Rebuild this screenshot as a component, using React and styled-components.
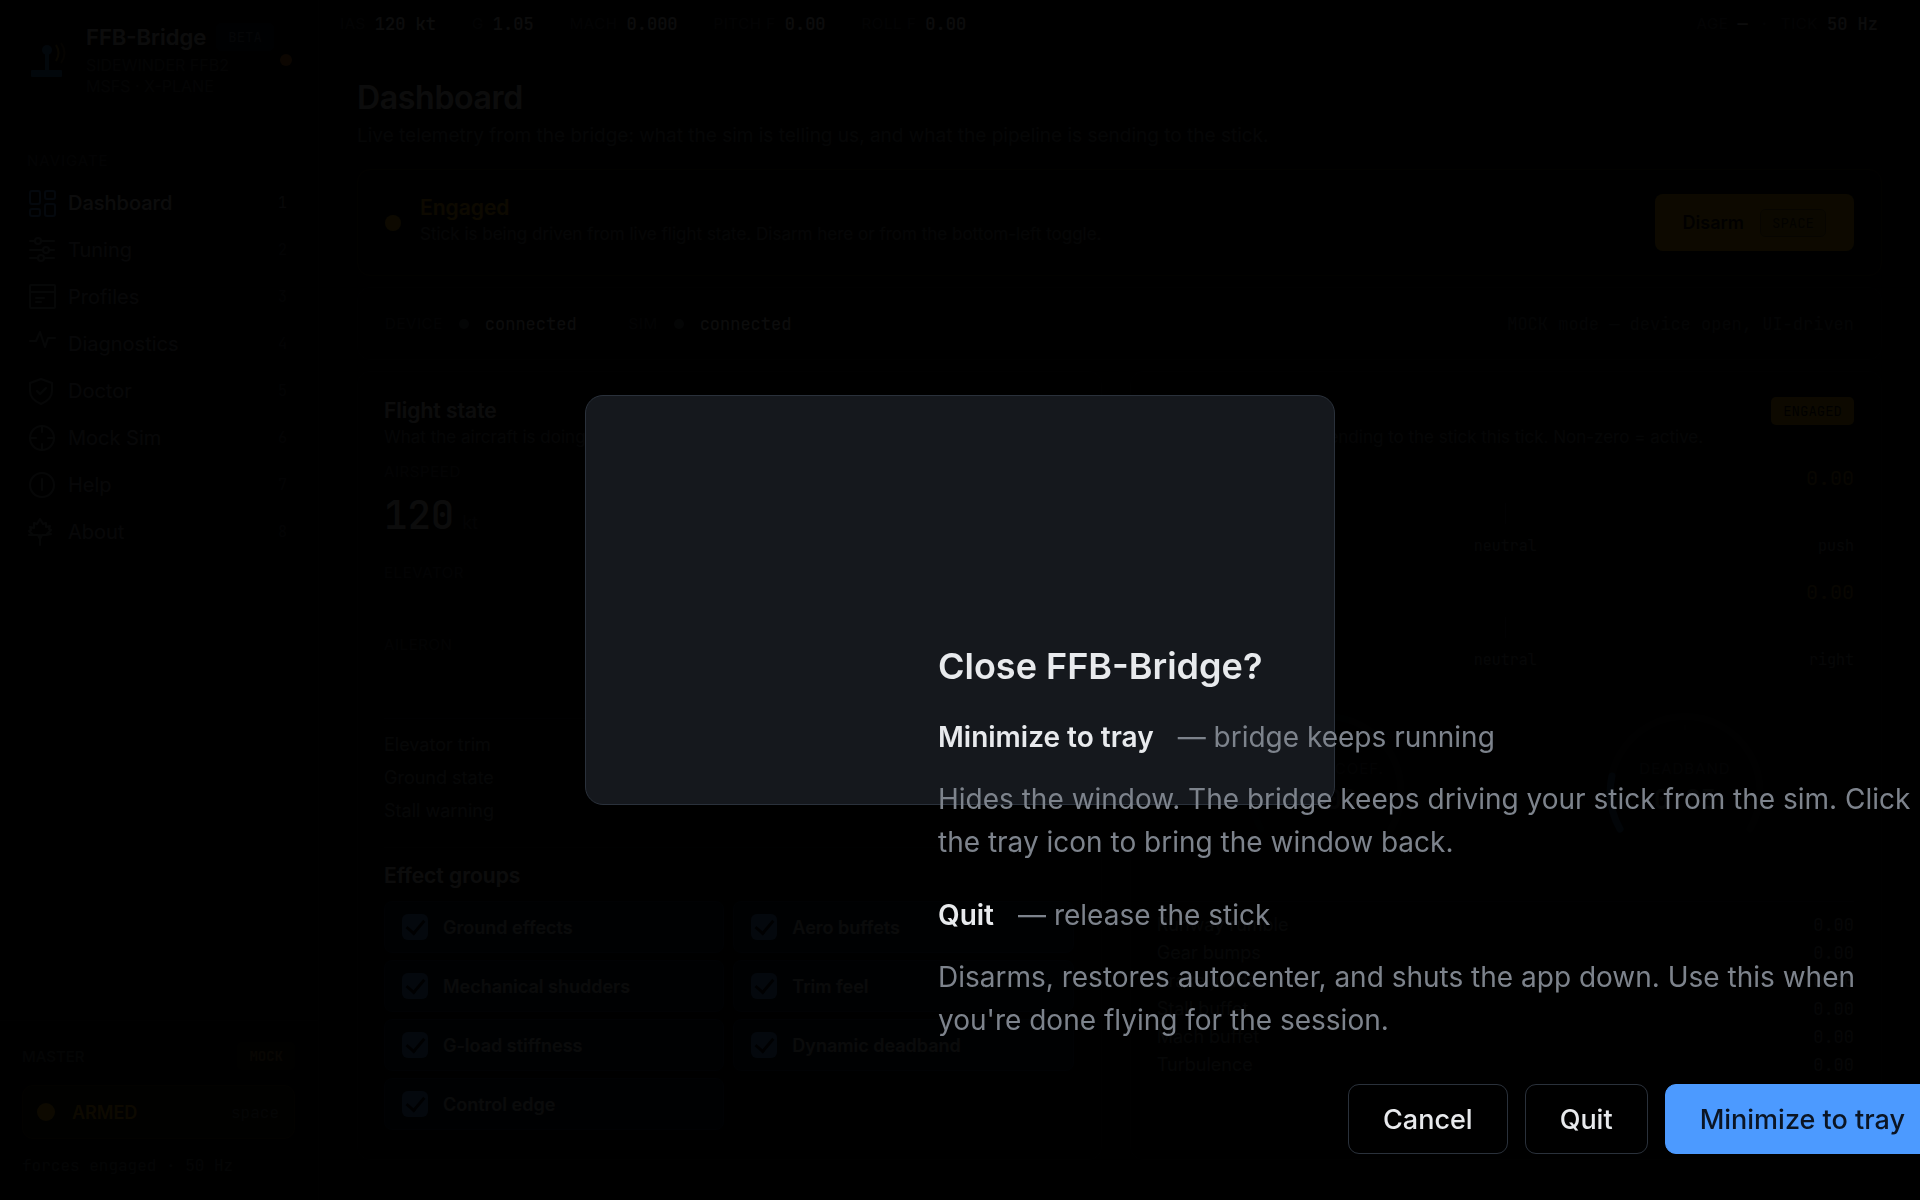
import React, { useState } from 'react';
import styled, { createGlobalStyle } from 'styled-components';

const mono = `'JetBrains Mono', 'DejaVu Sans Mono', 'Liberation Mono', monospace`;

const GlobalStyle = createGlobalStyle`
  * {
    box-sizing: border-box;
  }

  body {
    margin: 0;
    background: #08090b;
    color: #e8eaed;
    font-family: Inter, 'Liberation Sans', sans-serif;
    font-size: 18px;
    overflow: hidden;
  }

  button, input {
    font-family: inherit;
  }

  h1, h2, p, dl, dd, ul {
    margin: 0;
    padding: 0;
  }
`;

const Shell = styled.div`
  display: grid;
  grid-template-columns: 319px minmax(0, 1fr);
  min-height: 100vh;
`;

/* ---------- sidebar ---------- */

const Sidebar = styled.aside`
  display: flex;
  flex-direction: column;
  height: 100vh;
  border-right: 1px solid #1a1e24;
  background: #08090b;
`;

const Brand = styled.div`
  display: flex;
  align-items: center;
  gap: 20px;
  padding: 23px 26px 32px 22px;
`;

const BrandText = styled.div`
  flex: 1;
  min-width: 0;
`;

const BrandTitle = styled.div`
  display: flex;
  align-items: center;
  gap: 10px;
  height: 28px;
  font-size: 22px;
  font-weight: 600;
  white-space: nowrap;
`;

const BrandSub = styled.div`
  margin-top: 4px;
  font-size: 16px;
  line-height: 21px;
  color: #4a4f58;
  white-space: nowrap;
`;

const Badge = styled.span`
  display: inline-flex;
  align-items: center;
  height: 28px;
  padding: 0 11px;
  border: 1px solid ${(p) => p.$border || 'transparent'};
  border-radius: 5px;
  background: ${(p) => p.$bg};
  color: ${(p) => p.$color};
  font-family: ${mono};
  font-size: 14px;
  font-weight: ${(p) => p.$weight || 400};
`;

const Dot = styled.span`
  flex: none;
  width: ${(p) => p.$size}px;
  height: ${(p) => p.$size}px;
  border-radius: 50%;
  background: ${(p) => p.$color};
`;

const Nav = styled.nav`
  display: flex;
  flex-direction: column;
  gap: 3px;
  padding: 22px 13px;
`;

const NavCaption = styled.div`
  padding: 0 14px 7px;
  font-size: 15px;
  line-height: 20px;
  letter-spacing: 1px;
  color: #42474f;
`;

const NavItem = styled.a`
  display: flex;
  align-items: center;
  gap: 12px;
  height: 44px;
  padding: 0 18px 0 15px;
  border-radius: 8px;
  font-size: 20px;
  text-decoration: none;
  font-weight: ${(p) => (p.$active ? 500 : 400)};
  color: ${(p) => (p.$active ? '#e8eaed' : '#8a9099')};

  svg {
    width: 28px;
    height: 28px;
    color: ${(p) => (p.$active ? '#4c9aff' : '#7d838c')};
  }
`;

const NavKey = styled.span`
  margin-left: auto;
  font-family: ${mono};
  font-size: 15px;
  font-weight: 400;
  color: ${(p) => (p.$active ? '#8a9099' : '#42474f')};
`;

const SideFoot = styled.div`
  display: flex;
  flex-direction: column;
  gap: 15px;
  margin-top: auto;
  padding: 21px 23px 22px 22px;
  border-top: 1px solid #1a1e24;
`;

const FootRow = styled.div`
  display: flex;
  align-items: center;
  justify-content: space-between;
  font-size: 15px;
  font-weight: 500;
  color: #5b616b;
`;

const ArmButton = styled.button`
  display: flex;
  align-items: center;
  gap: 17px;
  height: 54px;
  padding: 0 15px 0 14px;
  border: 1px solid #3f330f;
  border-radius: 11px;
  background: #16130a;
  color: #f0b400;
  font-size: 18px;
  font-weight: 600;
`;

const ArmKey = styled.span`
  margin-left: auto;
  font-family: ${mono};
  font-size: 16px;
  font-weight: 400;
  color: #5b616b;
`;

const FootNote = styled.div`
  font-family: ${mono};
  font-size: 16px;
  line-height: 24px;
  color: #5b616b;
`;

/* ---------- main column ---------- */

const Topbar = styled.header`
  display: flex;
  align-items: center;
  gap: 36px;
  height: 47px;
  padding: 0 42px 0 21px;
`;

const Stat = styled.span`
  display: flex;
  align-items: center;
  gap: 9px;
  font-size: 15px;
  color: #42474f;
  letter-spacing: 0.04em;
  white-space: nowrap;

  b {
    font-family: ${mono};
    font-size: 17px;
    font-weight: 500;
    letter-spacing: 0;
    color: #e8eaed;
  }
`;

const TopRight = styled.div`
  display: flex;
  align-items: center;
  gap: 14px;
  margin-left: auto;
  color: #42474f;
`;

const Content = styled.main`
  display: flex;
  flex-direction: column;
  gap: 11px;
  padding: 31px 38px;
`;

const PageHead = styled.div`
  display: flex;
  flex-direction: column;
  gap: 4px;
  padding-bottom: 9px;
`;

const PageTitle = styled.h1`
  font-size: 32px;
  line-height: 40px;
  font-weight: 600;
  letter-spacing: -0.01em;
`;

const PageSub = styled.p`
  font-size: 19px;
  line-height: 27px;
  color: #6b717a;
`;

const Banner = styled.section`
  display: flex;
  align-items: center;
  gap: 19px;
  height: 107px;
  padding: 0 27px;
  border: 1px solid #33290f;
  border-radius: 13px;
  background: #12100a;
`;

const BannerTitle = styled.div`
  font-size: 21px;
  line-height: 28px;
  font-weight: 600;
  color: #f0b400;
`;

const CardSub = styled.p`
  font-size: 17px;
  line-height: 24px;
  color: #6b717a;
  white-space: nowrap;
`;

const BannerText = styled.div`
  flex: 1;
  padding-bottom: 6px;
`;

const DisarmButton = styled.button`
  display: flex;
  align-items: center;
  gap: 16px;
  height: 57px;
  padding: 0 28px;
  border: 0;
  border-radius: 8px;
  background: #f0b400;
  color: #14100a;
  font-size: 18px;
  font-weight: 600;
`;

const StatusBar = styled.section`
  display: flex;
  align-items: center;
  gap: 52px;
  height: 73px;
  padding: 0 27px;
  border: 1px solid #14171b;
  border-radius: 13px;
  font-family: ${mono};
  font-size: 17px;
`;

const StatusItem = styled.span`
  display: flex;
  align-items: center;
  gap: 16px;
`;

const Caption = styled.span`
  font-family: Inter, 'Liberation Sans', sans-serif;
  font-size: 15px;
  line-height: 20px;
  letter-spacing: 0.04em;
  color: #42474f;
`;

const StatusNote = styled.span`
  margin-left: auto;
  color: #5b616b;
`;

const Columns = styled.div`
  display: grid;
  grid-template-columns: minmax(0, 99fr) minmax(0, 100fr);
  gap: 28px;
`;

const Card = styled.section`
  padding: 25px 27px 29px 26px;
  border: 1px solid #14171b;
  border-radius: 13px;
`;

const CardHead = styled.div`
  display: flex;
  justify-content: space-between;
  align-items: flex-start;
`;

const CardTitle = styled.h2`
  font-size: 21px;
  line-height: 28px;
  font-weight: 600;
`;

const Airspeed = styled.div`
  display: flex;
  flex-direction: column;
  gap: 9px;
  padding-top: 13px;
`;

const BigValue = styled.div`
  display: flex;
  align-items: baseline;
  gap: 8px;
  font-family: ${mono};
  font-size: 39px;
  line-height: 48px;
  font-weight: 500;

  small {
    font-family: Inter, 'Liberation Sans', sans-serif;
    font-size: 18px;
    font-weight: 400;
    color: #42474f;
  }
`;

const Axis = styled.div`
  display: flex;
  flex-direction: column;
  gap: 9px;
  height: 72px;
`;

const AxisTrack = styled.div`
  height: 10px;
  border-radius: 5px;
  background: #08090b;
`;

const AxisList = styled.div`
  padding: 16px 0 11px;
`;

const Rows = styled.dl`
  padding: 9px 0 ${(p) => p.$bottom}px;
  border-top: 1px solid #1f242b;
  font-size: 18px;
  line-height: ${(p) => p.$line}px;
  color: #7d838c;
`;

const Row = styled.div`
  display: flex;
  justify-content: space-between;

  dd {
    font-family: ${mono};
    font-size: 17px;
  }
`;

const Effects = styled.div`
  padding-top: 14px;
  border-top: 1px solid #14171b;
`;

const EffectGrid = styled.div`
  display: grid;
  grid-template-columns: 1fr 1fr;
  gap: 7px 9px;
  padding-top: 11px;
`;

const Effect = styled.label`
  display: flex;
  align-items: center;
  gap: 15px;
  height: 52px;
  padding: 0 17px;
  border: 1px solid #14284a;
  border-radius: 8px;
  background: #0e2036;
  color: #c9ccd1;
  font-size: 18px;
  font-weight: 600;
`;

const Tick = styled.input.attrs({ type: 'checkbox' })`
  appearance: none;
  display: grid;
  place-items: center;
  width: 26px;
  height: 26px;
  margin: 0;
  border-radius: 6px;
  background: #2a3038;

  &:checked {
    background: #4c9aff;
  }

  &:checked::after {
    content: '';
    width: 8px;
    height: 15px;
    margin-bottom: 4px;
    border: solid #06101c;
    border-width: 0 3px 3px 0;
    transform: rotate(40deg);
  }
`;

const Force = styled.div`
  display: flex;
  flex-direction: column;
  padding-bottom: 22px;
`;

const ForceHead = styled.div`
  display: flex;
  align-items: center;
  justify-content: space-between;
  height: 28px;
  font-size: 18px;
  color: #6b717a;

  output {
    font-family: ${mono};
    font-size: 20px;
    color: #a07a1c;
  }
`;

const ForceTrack = styled.div`
  display: flex;
  justify-content: center;
  height: 21px;
  margin: 11px 0 12px;
  border-radius: 5px;
  background: #08090b;

  span {
    width: 1px;
    background: #2a3038;
  }
`;

const ForceScale = styled.div`
  display: grid;
  grid-template-columns: 1fr auto 1fr;
  font-family: ${mono};
  font-size: 15px;
  line-height: 20px;
  color: #7d838c;

  span:last-child {
    text-align: right;
  }
`;

const Forces = styled.div`
  padding-top: 15px;
`;

const Gauges = styled.div`
  display: grid;
  grid-template-columns: 1fr 1fr;
  gap: 22px;
  justify-items: center;
  padding: 18px 0 61px;
`;

const GaugeSvg = styled.svg`
  width: 160px;
  height: 130px;

  text {
    text-anchor: middle;
  }
`;

/* ---------- close dialog ---------- */

const Backdrop = styled.div`
  position: fixed;
  inset: 0;
  display: grid;
  place-items: center;
  overflow: hidden;
  background: rgba(0, 0, 0, 0.95);
`;

const Dialog = styled.div`
  position: relative;
  width: 750px;
  height: 410px;
  border: 1px solid #2a313b;
  border-radius: 18px;
  background: #15181d;
  box-shadow: 0 26px 80px rgba(0, 0, 0, 0.6);
`;

const DialogBody = styled.div`
  position: absolute;
  top: 243px;
  left: 352px;
  width: 1002px;
  font-size: 28px;
  line-height: 43px;
  color: #7d838c;
`;

const DialogTitle = styled.h2`
  padding-bottom: 23px;
  font-size: 36px;
  line-height: 54px;
  font-weight: 600;
  color: #e8eaed;
`;

const Choice = styled.div`
  display: flex;
  gap: 24px;
  padding-bottom: 19px;

  strong {
    font-weight: 600;
    color: #e8eaed;
  }
`;

const ChoiceText = styled.p`
  padding-bottom: 30px;
`;

const DialogActions = styled.div`
  display: flex;
  justify-content: flex-end;
  gap: 17px;
  padding-top: 12px;
`;

const DialogButton = styled.button`
  height: 70px;
  padding: 0 34px;
  border: 1px solid ${(p) => (p.$primary ? '#4c9aff' : '#2a313b')};
  border-radius: 11px;
  background: ${(p) => (p.$primary ? '#4c9aff' : 'transparent')};
  color: ${(p) => (p.$primary ? '#0b1524' : '#e8eaed')};
  font-size: 27px;
  font-weight: 500;
  white-space: nowrap;
`;

/* ---------- icons ---------- */

const Icon = ({ children }) => (
  <svg
    viewBox="0 0 28 28"
    fill="none"
    stroke="currentColor"
    strokeWidth="2"
    strokeLinecap="round"
    strokeLinejoin="round"
    aria-hidden="true"
  >
    {children}
  </svg>
);

const LogoSvg = styled.svg`
  flex: none;
  width: 44px;
  height: 44px;
`;

const Logo = () => (
  <LogoSvg viewBox="0 0 44 44" aria-hidden="true">
    <rect x="9" y="32" width="31" height="7" rx="1" fill="#2f81d6" />
    <rect x="23" y="14" width="4" height="19" fill="#2f81d6" />
    <circle cx="25" cy="12" r="5" fill="#2f81d6" />
    <path d="M34 7q5 8 0 16" fill="none" stroke="#b08424" strokeWidth="2" />
    <path d="M39 5q7 10 0 20" fill="none" stroke="#5c4716" strokeWidth="2" />
  </LogoSvg>
);

const navItems = [
  {
    label: 'Dashboard',
    icon: (
      <>
        <rect x="2" y="2" width="10" height="13" rx="2" />
        <rect x="17" y="2" width="10" height="8" rx="2" />
        <rect x="2" y="20" width="10" height="7" rx="2" />
        <rect x="17" y="15" width="10" height="12" rx="2" />
      </>
    ),
  },
  {
    label: 'Tuning',
    icon: (
      <>
        <path d="M2 5h5M13 5h13M2 14h13M22 14h4M2 22h8M16 22h10" />
        <circle cx="10" cy="5" r="3" />
        <circle cx="18" cy="14" r="3" />
        <circle cx="13" cy="22" r="3" />
      </>
    ),
  },
  {
    label: 'Profiles',
    icon: (
      <>
        <rect x="2" y="2" width="25" height="23" rx="1" />
        <path d="M2 9h25M8 15h8M8 19h5" />
      </>
    ),
  },
  {
    label: 'Diagnostics',
    icon: <path d="M2 11h6l4-9 5 15 3-9h7" />,
  },
  {
    label: 'Doctor',
    icon: (
      <>
        <path d="M13 2l11 4v8c0 6-4 10-11 13C6 24 2 20 2 14V6z" />
        <path d="M9 14l3 3 6-6" />
      </>
    ),
  },
  {
    label: 'Mock Sim',
    icon: (
      <>
        <circle cx="14" cy="14" r="12" />
        <path d="M14 2v6M14 20v6M2 14h6M20 14h6" />
      </>
    ),
  },
  {
    label: 'Help',
    icon: (
      <>
        <circle cx="14" cy="14" r="12" />
        <path d="M14 8v11" />
      </>
    ),
  },
  {
    label: 'About',
    icon: (
      <path d="M12 1l3 5 3-1v4l4-1-1 3 2 1-4 4h4l-5 1-4 0-2 4-2-4H6L1 17h4l-4-4 2-1-1-3 4 1V5l3 1zM12 17v10" />
    ),
  },
];

const stats = [
  ['IAS', '120 kt'],
  ['G', '1.05'],
  ['MACH', '0.000'],
  ['PITCH F', '0.00'],
  ['ROLL F', '0.00'],
];

const effectGroups = [
  'Ground effects',
  'Aero buffets',
  'Mechanical shudders',
  'Trim feel',
  'G-load stiffness',
  'Dynamic deadband',
  'Control edge',
];

const effectLevels = [
  'Runway rumble',
  'Gear bumps',
  'Brake judder',
  'Stall buffet',
  'Mach buffet',
  'Turbulence',
];

const ForceRow = ({ name, low, high }) => (
  <Force>
    <ForceHead>
      <span>{name}</span>
      <output>0.00</output>
    </ForceHead>
    <ForceTrack>
      <span />
    </ForceTrack>
    <ForceScale>
      <span>{low}</span>
      <span>neutral</span>
      <span>{high}</span>
    </ForceScale>
  </Force>
);

const Gauge = ({ label, value, fill }) => (
  <GaugeSvg viewBox="0 0 160 130" role="img" aria-label={label}>
    <path
      d="M15 119A75 75 0 1 1 145 119"
      fill="none"
      stroke="#171c21"
      strokeWidth="7"
      strokeLinecap="round"
    />
    {fill && (
      <path
        d="M15 119A75 75 0 0 1 7 66"
        fill="none"
        stroke="#2f5f99"
        strokeWidth="7"
        strokeLinecap="round"
      />
    )}
    <path d="M80 15v5" stroke="#2a2f37" />
    <text x="80" y="64" fontSize="15" letterSpacing="1" fill="#42474f">
      {label}
    </text>
    <text x="80" y="99" fontSize="26" fontWeight="600" fontFamily={mono} fill="#6b717a">
      {value}
    </text>
  </GaugeSvg>
);

const CloseDialog = () => (
  <Backdrop>
    <Dialog role="dialog" aria-modal="true" aria-labelledby="close-title">
      <DialogBody>
        <DialogTitle id="close-title">Close FFB-Bridge?</DialogTitle>
        <Choice>
          <strong>Minimize to tray</strong>
          <span>— bridge keeps running</span>
        </Choice>
        <ChoiceText>
          Hides the window. The bridge keeps driving your stick from the sim. Click the tray icon
          to bring the window back.
        </ChoiceText>
        <Choice>
          <strong>Quit</strong>
          <span>— release the stick</span>
        </Choice>
        <ChoiceText>
          Disarms, restores autocenter, and shuts the app down. Use this when you're done flying
          for the session.
        </ChoiceText>
        <DialogActions>
          <DialogButton>Cancel</DialogButton>
          <DialogButton>Quit</DialogButton>
          <DialogButton $primary>Minimize to tray</DialogButton>
        </DialogActions>
      </DialogBody>
    </Dialog>
  </Backdrop>
);

const App = () => {
  const [enabled, setEnabled] = useState(effectGroups);

  const toggle = (name) => {
    setEnabled((prev) =>
      prev.includes(name) ? prev.filter((item) => item !== name) : [...prev, name]
    );
  };

  return (
    <>
      <GlobalStyle />
      <Shell>
        <Sidebar>
          <Brand>
            <Logo />
            <BrandText>
              <BrandTitle>
                FFB-Bridge
                <Badge $bg="#0e1626" $border="#121e33" $color="#5f7391">
                  BETA
                </Badge>
              </BrandTitle>
              <BrandSub>
                SIDEWINDER FFB2
                <br />
                MSFS · X-PLANE
              </BrandSub>
            </BrandText>
            <Dot $size={12} $color="#e07a1a" />
          </Brand>
          <Nav>
            <NavCaption>NAVIGATE</NavCaption>
            {navItems.map((item, i) => (
              <NavItem key={item.label} href={`#${item.label}`} $active={i === 0}>
                <Icon>{item.icon}</Icon>
                {item.label}
                <NavKey $active={i === 0}>{i + 1}</NavKey>
              </NavItem>
            ))}
          </Nav>
          <SideFoot>
            <FootRow>
              MASTER
              <Badge $bg="#20180c" $color="#94743a" $weight={600}>
                MOCK
              </Badge>
            </FootRow>
            <ArmButton>
              <Dot $size={18} $color="#f0b400" />
              ARMED
              <ArmKey>space</ArmKey>
            </ArmButton>
            <FootNote>forces engaged · 50 Hz</FootNote>
          </SideFoot>
        </Sidebar>

        <div>
          <Topbar>
            {stats.map(([name, value]) => (
              <Stat key={name}>
                {name} <b>{value}</b>
              </Stat>
            ))}
            <TopRight>
              <Stat>
                AGE <b>—</b>
              </Stat>
              ·
              <Stat>
                TICK <b>50 Hz</b>
              </Stat>
            </TopRight>
          </Topbar>

          <Content>
            <PageHead>
              <PageTitle>Dashboard</PageTitle>
              <PageSub>
                Live telemetry from the bridge: what the sim is telling us, and what the pipeline is
                sending to the stick.
              </PageSub>
            </PageHead>

            <Banner>
              <Dot $size={16} $color="#f0b400" />
              <BannerText>
                <BannerTitle>Engaged</BannerTitle>
                <CardSub>
                  Stick is being driven from live flight state. Disarm here or from the bottom-left
                  toggle.
                </CardSub>
              </BannerText>
              <DisarmButton>
                Disarm
                <Badge $bg="#cf9c08" $border="#8f6a18" $color="#3a2c0c">
                  SPACE
                </Badge>
              </DisarmButton>
            </Banner>

            <StatusBar>
              <StatusItem>
                <Caption>DEVICE</Caption>
                <Dot $size={10} $color="#5b616b" />
                connected
              </StatusItem>
              <StatusItem>
                <Caption>SIM</Caption>
                <Dot $size={10} $color="#5b616b" />
                connected
              </StatusItem>
              <StatusNote>MOCK mode — device open, UI-driven</StatusNote>
            </StatusBar>

            <Columns>
              <Card>
                <CardTitle>Flight state</CardTitle>
                <CardSub>What the aircraft is doing right now.</CardSub>
                <Airspeed>
                  <Caption>AIRSPEED</Caption>
                  <BigValue>
                    120 <small>kt</small>
                  </BigValue>
                </Airspeed>
                <AxisList>
                  <Axis>
                    <Caption>ELEVATOR</Caption>
                    <AxisTrack />
                  </Axis>
                  <Axis>
                    <Caption>AILERON</Caption>
                    <AxisTrack />
                  </Axis>
                </AxisList>
                <Rows $line={33} $bottom={20}>
                  <Row>
                    <dt>Elevator trim</dt>
                  </Row>
                  <Row>
                    <dt>Ground state</dt>
                  </Row>
                  <Row>
                    <dt>Stall warning</dt>
                  </Row>
                </Rows>
                <Effects>
                  <CardTitle>Effect groups</CardTitle>
                  <EffectGrid>
                    {effectGroups.map((name) => (
                      <Effect key={name}>
                        <Tick checked={enabled.includes(name)} onChange={() => toggle(name)} />
                        {name}
                      </Effect>
                    ))}
                  </EffectGrid>
                </Effects>
              </Card>

              <Card>
                <CardHead>
                  <div>
                    <CardTitle>Force output</CardTitle>
                    <CardSub>
                      What the pipeline is sending to the stick this tick. Non-zero = active.
                    </CardSub>
                  </div>
                  <Badge $bg="#f0b400" $color="#14100a">
                    ENGAGED
                  </Badge>
                </CardHead>
                <Forces>
                  <ForceRow name="Pitch" low="pull" high="push" />
                  <ForceRow name="Roll" low="left" high="right" />
                </Forces>
                <Gauges>
                  <Gauge label="SPRING COEF." value="0.00" />
                  <Gauge label="DEADBAND" value="0.05" fill />
                </Gauges>
                <Rows $line={28} $bottom={0}>
                  {effectLevels.map((name) => (
                    <Row key={name}>
                      <dt>{name}</dt>
                      <dd>0.00</dd>
                    </Row>
                  ))}
                </Rows>
              </Card>
            </Columns>
          </Content>
        </div>
      </Shell>
      <CloseDialog />
    </>
  );
};

export default App;
